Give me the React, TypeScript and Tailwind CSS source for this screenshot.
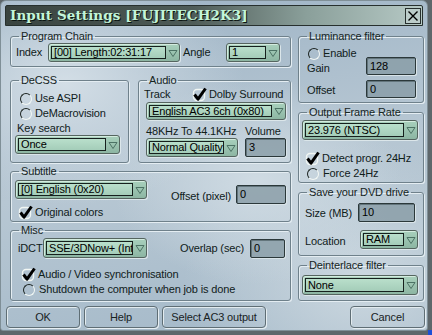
import type { ReactNode } from "react";

const Radio = () => (
  <span className="inline-block h-[12px] w-[12px] shrink-0 rounded-full border-[1.5px] border-t-[#1c2421] border-l-[#1c2421] border-r-[#f3f8f5] border-b-[#f3f8f5]" />
);

const Check = () => (
  <svg width="16" height="15" viewBox="0 0 16 15" className="shrink-0">
    <rect x="1.5" y="2.5" width="11" height="11" rx="3.5" fill="none" stroke="#f1f6f3" strokeWidth="1.4" />
    <path d="M2.5 7.5 L6 12.2 L13.5 1.5" fill="none" stroke="#000" strokeWidth="3" strokeLinejoin="round" />
  </svg>
);

const Combo = ({ className, text }: { className: string; text: string }) => (
  <div
    className={`flex items-center rounded-[3px] border border-[#55655f] bg-[linear-gradient(180deg,#a8d0bc,#8db6a3)] pl-[2px] shadow-[inset_1px_1px_0_#d3ebde,1px_1px_0_#dbe6ea] ${className}`}
  >
    <div className="flex h-[calc(100%-4px)] min-w-0 flex-1 items-center overflow-hidden border border-[#16201d] bg-[linear-gradient(180deg,#b9dfcb,#a4cdb9)] pl-[2px] leading-none text-black">
      {text}
    </div>
    <svg width="13" height="10" viewBox="0 0 13 10" className="shrink-0">
      <path d="M3 2.5 H11 L7 8.5 Z" fill="none" stroke="#4c7264" strokeWidth="1" />
    </svg>
  </div>
);

const Field = ({ className, value }: { className: string; value: string }) => (
  <div
    className={`flex items-center rounded-[2px] border border-[#2b383a] bg-[#879ba5]/80 pl-[3px] leading-none text-black shadow-[inset_1px_1px_0_#63757c,1px_1px_0_#d8e3e8] ${className}`}
  >
    {value}
  </div>
);

const Group = ({ title, className, children }: { title: string; className: string; children?: ReactNode }) => (
  <fieldset className={`rounded-[3px] border border-[#6f818b] shadow-[inset_1px_1px_0_#e4edf2,1px_1px_0_#e4edf2] ${className}`}>
    <legend className="ml-[8px] px-[2px] leading-[14px] text-[#16251e]">{title}</legend>
    {children}
  </fieldset>
);

const Button = ({ className, label }: { className: string; label: string }) => (
  <div
    className={`flex h-[22px] items-center justify-center rounded-[4px] border border-[#5f6e75] text-[#18221f] shadow-[inset_1px_1px_0_#e2ebef,1px_1px_0_#e6eef2] ${className}`}
  >
    {label}
  </div>
);

export default function App() {
  return (
    <div className="relative h-[335px] w-[432px] overflow-hidden whitespace-nowrap bg-[#5e676b] font-['Liberation_Sans',Arial,sans-serif] text-[11px] tracking-[-0.15px] text-[#10201a]">
      <div className="flex h-[331px] w-[428px] flex-col rounded-t-[6px] rounded-b-[3px] border border-[#7f8f97] bg-[radial-gradient(ellipse_at_15%_25%,#d3dee6_0%,transparent_35%),radial-gradient(ellipse_at_60%_55%,#cfdbe3_0%,transparent_40%),radial-gradient(ellipse_at_85%_85%,#ccd8e0_0%,transparent_35%),linear-gradient(170deg,#9db3c5,#b7c7d3_50%,#a3b8c8)]">
        {/* title bar */}
        <div className="mx-[4px] mt-[4px] flex h-[21px] items-center rounded-t-[2px] border border-[#27302e] bg-[linear-gradient(90deg,#39433f,#4f5c58_45%,#8a9f9a_72%,#b6c9c5)] pl-[4px] pr-[1px]">
          <span className="font-['DejaVu_Serif',serif] text-[13.5px] font-bold leading-none tracking-[0.1px] text-[#c3f6d9] [text-shadow:1px_1px_0_#0c1512]">
            Input Settings [FUJITECH2K3]
          </span>
          <div className="ml-auto flex h-[16px] w-[16px] items-center justify-center border border-[#27302e] bg-[#bccdca]">
            <svg width="12" height="12" viewBox="0 0 12 12">
              <path d="M1.5 1.5 L10.5 10.5 M10.5 1.5 L1.5 10.5" stroke="#000" strokeWidth="1.4" />
            </svg>
          </div>
        </div>

        {/* body */}
        <div className="mt-[3px] flex gap-[7px] pl-[9px] pr-[3px]">
          {/* left column */}
          <div className="flex w-[281px] flex-col">
            <Group title="Program Chain" className="h-[38px]">
              <div className="flex items-center pl-[5px]">
                <span className="w-[32px]">Index</span>
                <Combo className="h-[19px] w-[132px]" text="[00] Length:02:31:17" />
                <span className="ml-[3px] w-[43px]">Angle</span>
                <Combo className="h-[19px] w-[54px]" text="1" />
              </div>
            </Group>

            <div className="mt-[6px] flex h-[90px] gap-[9px]">
              <Group title="DeCSS" className="h-[90px] w-[119px]">
                <div className="flex flex-col pt-[4px]">
                  <div className="flex h-[15px] items-center gap-[3px] pl-[9px]">
                    <Radio />
                    <span>Use ASPI</span>
                  </div>
                  <div className="flex h-[15px] items-center gap-[3px] pl-[9px]">
                    <Radio />
                    <span>DeMacrovision</span>
                  </div>
                  <div className="flex h-[14px] items-center pl-[6px]">Key search</div>
                  <Combo className="ml-[4px] h-[19px] w-[105px]" text="Once" />
                </div>
              </Group>

              <Group title="Audio" className="h-[90px] flex-1">
                <div className="flex flex-col">
                  <div className="flex h-[14px] items-center pl-[5px]">
                    <span className="w-[48px]">Track</span>
                    <Check />
                    <span className="ml-[1px]">Dolby Surround</span>
                  </div>
                  <Combo className="ml-[7px] mt-[1px] h-[18px] w-[140px]" text="English AC3 6ch (0x80)" />
                  <div className="mt-[4px] flex h-[14px] items-center pl-[7px]">
                    <span className="w-[99px]">48KHz To 44.1KHz</span>
                    <span>Volume</span>
                  </div>
                  <div className="flex items-center pl-[7px]">
                    <Combo className="h-[19px] w-[92px]" text="Normal Quality 48KHz" />
                    <Field className="ml-[7px] h-[19px] w-[41px]" value="3" />
                  </div>
                </div>
              </Group>
            </div>

            <Group title="Subtitle" className="mt-[1px] h-[58px]">
              <div className="flex">
                <div className="ml-[4px] flex w-[132px] flex-col">
                  <Combo className="mt-[2px] h-[19px] w-[132px]" text="[0] English (0x20)" />
                  <div className="mt-[6px] flex h-[14px] items-center">
                    <span className="ml-[3px]">
                      <Check />
                    </span>
                    <span className="ml-[1px]">Original colors</span>
                  </div>
                </div>
                <div className="ml-[24px] mt-[7px] flex h-[19px] items-center">
                  <span className="w-[65px] pt-[3px]">Offset (pixel)</span>
                  <Field className="h-[19px] w-[50px]" value="0" />
                </div>
              </div>
            </Group>

            <Group title="Misc" className="mt-[1px] h-[78px]">
              <div className="flex flex-col">
                <div className="mt-[1px] flex h-[20px] items-center">
                  <span className="ml-[7px] w-[25px]">iDCT</span>
                  <Combo className="h-[20px] w-[104px]" text="SSE/3DNow+ (Intel)" />
                  <span className="ml-[33px] w-[70px]">Overlap (sec)</span>
                  <Field className="h-[19px] w-[35px]" value="0" />
                </div>
                <div className="mt-[9px] flex h-[15px] items-center pl-[10px]">
                  <Check />
                  <span className="ml-[1px]">Audio / Video synchronisation</span>
                </div>
                <div className="flex h-[15px] items-center gap-[4px] pl-[12px]">
                  <Radio />
                  <span>Shutdown the computer when job is done</span>
                </div>
              </div>
            </Group>
          </div>

          {/* right column */}
          <div className="flex w-[126px] flex-col">
            <Group title="Luminance filter" className="h-[74px]">
              <div className="flex flex-col">
                <div className="mt-[3px] flex h-[15px] items-center gap-[3px] pl-[9px]">
                  <Radio />
                  <span>Enable</span>
                </div>
                <div className="-mt-[4px] flex h-[18px] items-center pl-[8px]">
                  <span className="w-[59px] pt-[4px]">Gain</span>
                  <Field className="h-[18px] w-[50px]" value="128" />
                </div>
                <div className="mt-[5px] flex h-[18px] items-center pl-[8px]">
                  <span className="w-[59px] pt-[3px]">Offset</span>
                  <Field className="h-[18px] w-[50px]" value="0" />
                </div>
              </div>
            </Group>

            <Group title="Output Frame Rate" className="mt-[2px] h-[78px]">
              <div className="flex flex-col">
                <Combo className="ml-[3px] mt-[1px] h-[20px] w-[116px]" text="23.976 (NTSC)" />
                <div className="mt-[11px] flex h-[15px] items-center pl-[6px]">
                  <Check />
                  <span className="ml-[1px]">Detect progr. 24Hz</span>
                </div>
                <div className="flex h-[15px] items-center gap-[4px] pl-[8px]">
                  <Radio />
                  <span>Force 24Hz</span>
                </div>
              </div>
            </Group>

            <Group title="Save your DVD drive" className="mt-[2px] h-[71px]">
              <div className="flex flex-col">
                <div className="mt-[4px] flex h-[19px] items-center pl-[6px]">
                  <span className="w-[53px] pt-[2px]">Size (MB)</span>
                  <Field className="h-[19px] w-[57px]" value="10" />
                </div>
                <div className="mt-[8px] flex h-[19px] items-center pl-[6px]">
                  <span className="w-[55px] pt-[4px]">Location</span>
                  <Combo className="h-[19px] w-[58px]" text="RAM" />
                </div>
              </div>
            </Group>

            <Group title="Deinterlace filter" className="mt-[2px] h-[43px]">
              <Combo className="ml-[3px] mt-[3px] h-[20px] w-[116px]" text="None" />
            </Group>
          </div>
        </div>

        {/* buttons */}
        <div className="mt-[5px] flex gap-[4px] pl-[5px] pr-[2px]">
          <Button className="w-[74px]" label="OK" />
          <Button className="w-[74px]" label="Help" />
          <Button className="w-[104px]" label="Select AC3 output" />
          <Button className="ml-auto w-[75px]" label="Cancel" />
        </div>
      </div>
      <div className="absolute bottom-0 right-0 h-[5px] w-[4px] bg-[#1d4fd6]" />
    </div>
  );
}
